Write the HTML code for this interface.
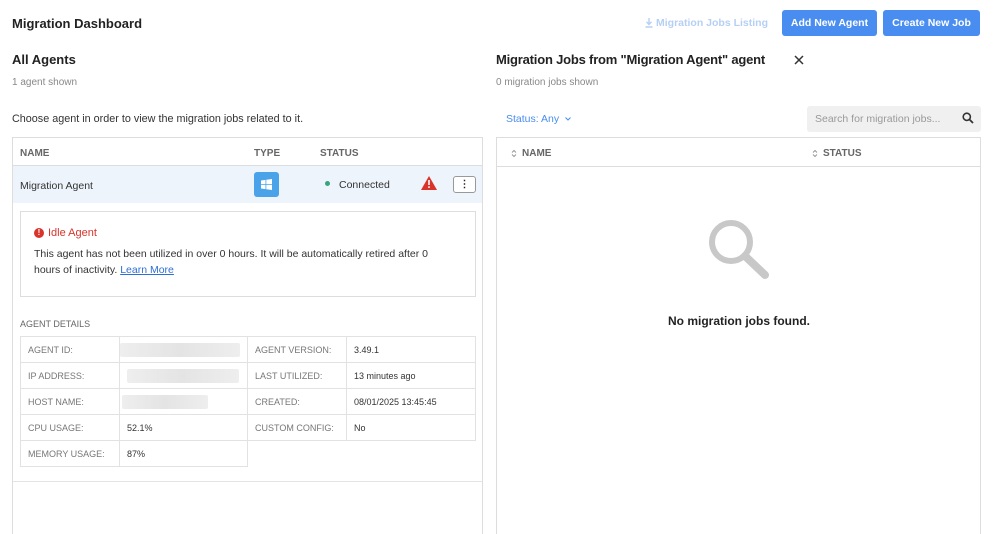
<!DOCTYPE html>
<html style="width:999px;height:534px;overflow:hidden"><head><style>
*{box-sizing:border-box;margin:0;padding:0}
body{width:999px;height:534px;background:#fff;font-family:"Liberation Sans",sans-serif;color:#222;position:relative;overflow:hidden}
.a{position:absolute;white-space:nowrap}
.btn{position:absolute;top:10px;height:26px;background:#4a8df0;color:#fff;font-size:10.5px;font-weight:bold;border-radius:3px;text-align:center;line-height:26px}
table{border-collapse:collapse;position:absolute;left:20px;top:336px;font-size:9px}
td{border:1px solid #e2e2e2;height:26px;padding-left:7px;color:#333}
td.l{color:#777}
.blur{display:inline-block;height:14px;background:linear-gradient(90deg,#eee,#e4e4e4,#eee);border-radius:2px;vertical-align:middle}
</style></head><body>
<div class="a" style="left:12px;top:16px;font-size:13px;font-weight:bold">Migration Dashboard</div>
<svg class="a" style="left:645px;top:18px" width="8" height="10" viewBox="0 0 8 10"><path d="M4 0v6M1.5 3.8L4 6.5 6.5 3.8M0.5 9h7" stroke="#b5cff5" stroke-width="1.4" fill="none"/></svg>
<div class="a" style="left:656px;top:17px;font-size:10.5px;color:#b5cff5;font-weight:bold">Migration Jobs Listing</div>
<div class="btn" style="left:782px;width:95px">Add New Agent</div>
<div class="btn" style="left:883px;width:97px">Create New Job</div>

<div class="a" style="left:12px;top:52px;font-size:13px;font-weight:bold">All Agents</div>
<div class="a" style="left:12px;top:77px;font-size:10px;color:#888">1 agent shown</div>
<div class="a" style="left:12px;top:113px;font-size:10.8px;color:#333">Choose agent in order to view the migration jobs related to it.</div>

<div class="a" style="left:12px;top:137px;width:471px;height:397px;border:1px solid #ddd;border-bottom:none"></div>
<div class="a" style="left:13px;top:165px;width:469px;height:1px;background:#ddd"></div>
<div class="a" style="left:20px;top:148px;font-size:10px;font-weight:bold;color:#666">NAME</div>
<div class="a" style="left:254px;top:148px;font-size:10px;font-weight:bold;color:#666">TYPE</div>
<div class="a" style="left:320px;top:148px;font-size:10px;font-weight:bold;color:#666">STATUS</div>
<div class="a" style="left:13px;top:166px;width:469px;height:37px;background:#eef4fc"></div>
<div class="a" style="left:20px;top:180px;font-size:10.5px;color:#333">Migration Agent</div>
<div class="a" style="left:254px;top:172px;width:25px;height:25px;background:#4aa3e8;border-radius:3px"><svg width="25" height="25" viewBox="0 0 25 25"><path d="M7 8.5l4.5-.6v4.2H7zM12.3 7.8l5.7-.8v5.1h-5.7zM7 12.9h4.5v4.2L7 16.5zM12.3 12.9H18V18l-5.7-.8z" fill="#fff"/></svg></div>
<div class="a" style="left:325px;top:181px;width:5px;height:5px;border-radius:50%;background:#3aa57a"></div>
<div class="a" style="left:339px;top:179px;font-size:10.5px;color:#333">Connected</div>
<svg class="a" style="left:421px;top:176px" width="16" height="14" viewBox="0 0 16 14"><path d="M8 0L16 14H0z" fill="#d9342b"/><rect x="7.2" y="4" width="1.6" height="5" fill="#fff"/><rect x="7.2" y="10.3" width="1.6" height="1.6" fill="#fff"/></svg>
<div class="a" style="left:453px;top:176px;width:23px;height:17px;border:1px solid #999;border-radius:3px;background:#fff;text-align:center;font-size:10px;line-height:15px;font-weight:bold">⋮</div>

<div class="a" style="left:20px;top:211px;width:456px;height:86px;border:1px solid #ddd"></div>
<div class="a" style="left:34px;top:228px;width:10px;height:10px;border-radius:50%;background:#d9342b;color:#fff;font-size:8px;text-align:center;line-height:10px;font-weight:bold">!</div>
<div class="a" style="left:48px;top:227px;font-size:11px;color:#d9342b">Idle Agent</div>
<div class="a" style="left:34px;top:246px;font-size:10.5px;color:#333;line-height:16px">This agent has not been utilized in over 0 hours. It will be automatically retired after 0<br>hours of inactivity. <span style="color:#2d6fd6;text-decoration:underline">Learn More</span></div>

<div class="a" style="left:20px;top:319px;font-size:9px;color:#666">AGENT DETAILS</div>
<table>
<tr><td class="l" style="width:99px">AGENT ID:</td><td style="width:128px;padding-left:0"><span class="blur" style="width:120px"></span></td><td class="l" style="width:99px">AGENT VERSION:</td><td style="width:129px">3.49.1</td></tr>
<tr><td class="l">IP ADDRESS:</td><td><span class="blur" style="width:112px"></span></td><td class="l">LAST UTILIZED:</td><td>13 minutes ago</td></tr>
<tr><td class="l">HOST NAME:</td><td style="padding-left:2px"><span class="blur" style="width:86px"></span></td><td class="l">CREATED:</td><td>08/01/2025 13:45:45</td></tr>
<tr><td class="l">CPU USAGE:</td><td>52.1%</td><td class="l">CUSTOM CONFIG:</td><td>No</td></tr>
<tr><td class="l">MEMORY USAGE:</td><td>87%</td><td style="border:none"></td><td style="border:none"></td></tr>
</table>
<div class="a" style="left:13px;top:481px;width:469px;height:1px;background:#e4e4e4"></div>

<div class="a" style="left:496px;top:52px;font-size:13px;font-weight:bold;letter-spacing:-0.2px">Migration Jobs from "Migration Agent" agent</div>
<svg class="a" style="left:794px;top:55px" width="10" height="10" viewBox="0 0 10 10"><path d="M1 1l8 8M9 1L1 9" stroke="#333" stroke-width="1.5"/></svg>
<div class="a" style="left:496px;top:77px;font-size:10px;color:#888">0 migration jobs shown</div>
<div class="a" style="left:506px;top:113px;font-size:10.5px;color:#4a8df0">Status: Any</div>
<svg class="a" style="left:565px;top:117px" width="6" height="4" viewBox="0 0 6 4"><path d="M0.5 0.5L3 3 5.5 0.5" stroke="#4a8df0" fill="none"/></svg>
<div class="a" style="left:807px;top:106px;width:174px;height:26px;background:#f0f0f0;border-radius:3px"></div>
<div class="a" style="left:815px;top:113px;font-size:10.5px;color:#999">Search for migration jobs...</div>
<svg class="a" style="left:962px;top:112px" width="12" height="12" viewBox="0 0 12 12"><circle cx="4.8" cy="4.8" r="3.6" fill="none" stroke="#333" stroke-width="1.6"/><path d="M7.5 7.5L11 11" stroke="#333" stroke-width="1.8"/></svg>

<div class="a" style="left:496px;top:137px;width:485px;height:397px;border:1px solid #ddd;border-bottom:none"></div>
<div class="a" style="left:497px;top:166px;width:483px;height:1px;background:#ddd"></div>
<svg class="a" style="left:511px;top:149px" width="6" height="9" viewBox="0 0 6 9"><path d="M1 3.5L3 1.5 5 3.5M1 5.5L3 7.5 5 5.5" stroke="#999" fill="none"/></svg>
<div class="a" style="left:522px;top:148px;font-size:10px;font-weight:bold;color:#666">NAME</div>
<svg class="a" style="left:812px;top:149px" width="6" height="9" viewBox="0 0 6 9"><path d="M1 3.5L3 1.5 5 3.5M1 5.5L3 7.5 5 5.5" stroke="#999" fill="none"/></svg>
<div class="a" style="left:823px;top:148px;font-size:10px;font-weight:bold;color:#666">STATUS</div>
<svg class="a" style="left:706px;top:218px" width="64" height="62" viewBox="0 0 64 62"><circle cx="25" cy="24" r="19" fill="none" stroke="#c8c8c8" stroke-width="6"/><path d="M39 38L59 57" stroke="#c8c8c8" stroke-width="8" stroke-linecap="round"/></svg>
<div class="a" style="left:668px;top:314px;font-size:12px;font-weight:bold;color:#222">No migration jobs found.</div>
</body></html>
